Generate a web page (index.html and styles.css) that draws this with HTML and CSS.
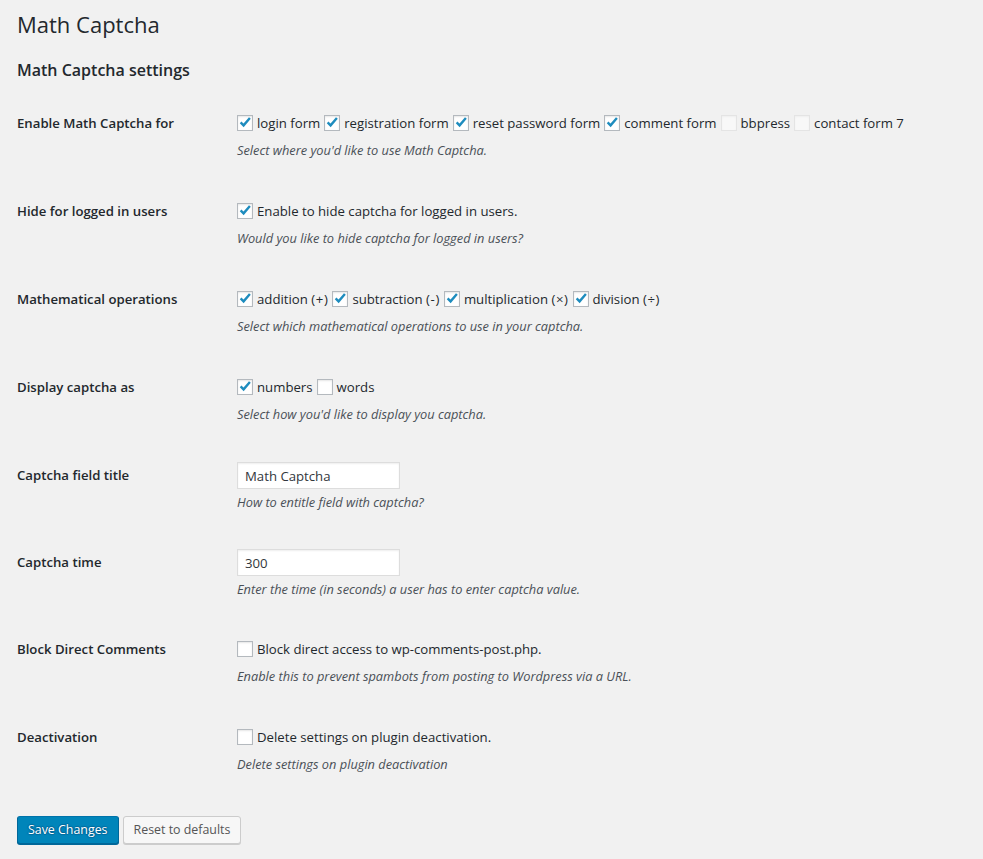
FILE: index.html
```html
<!DOCTYPE html>
<html lang="en">
<head>
<meta charset="utf-8">
<title>Math Captcha</title>
<link rel="stylesheet" href="styles.css">
</head>
<body>
<div class="wrap">
  <h1 class="page-title">Math Captcha</h1>
  <h2 class="section-title">Math Captcha settings</h2>

  <div class="form-table">
    <div class="row row-check">
      <div class="th">Enable Math Captcha for</div>
      <div class="td">
        <div class="line">
          <label class="opt"><span class="cb"><svg viewBox="0 0 16 16"><polyline points="3,7.8 6.4,11.3 13.6,2.8"/></svg></span>login form</label>
          <label class="opt"><span class="cb"><svg viewBox="0 0 16 16"><polyline points="3,7.8 6.4,11.3 13.6,2.8"/></svg></span>registration form</label>
          <label class="opt"><span class="cb"><svg viewBox="0 0 16 16"><polyline points="3,7.8 6.4,11.3 13.6,2.8"/></svg></span>reset password form</label>
          <label class="opt"><span class="cb"><svg viewBox="0 0 16 16"><polyline points="3,7.8 6.4,11.3 13.6,2.8"/></svg></span>comment form</label>
          <label class="opt"><span class="cb disabled"></span>bbpress</label>
          <label class="opt"><span class="cb disabled"></span>contact form 7</label>
        </div>
        <p class="description">Select where you'd like to use Math Captcha.</p>
      </div>
    </div>

    <div class="row row-check">
      <div class="th">Hide for logged in users</div>
      <div class="td">
        <div class="line">
          <label class="opt"><span class="cb"><svg viewBox="0 0 16 16"><polyline points="3,7.8 6.4,11.3 13.6,2.8"/></svg></span>Enable to hide captcha for logged in users.</label>
        </div>
        <p class="description">Would you like to hide captcha for logged in users?</p>
      </div>
    </div>

    <div class="row row-check">
      <div class="th">Mathematical operations</div>
      <div class="td">
        <div class="line">
          <label class="opt"><span class="cb"><svg viewBox="0 0 16 16"><polyline points="3,7.8 6.4,11.3 13.6,2.8"/></svg></span>addition <span class="sym">(+)</span></label>
          <label class="opt"><span class="cb"><svg viewBox="0 0 16 16"><polyline points="3,7.8 6.4,11.3 13.6,2.8"/></svg></span>subtraction <span class="sym">(-)</span></label>
          <label class="opt"><span class="cb"><svg viewBox="0 0 16 16"><polyline points="3,7.8 6.4,11.3 13.6,2.8"/></svg></span>multiplication <span class="sym">(&times;)</span></label>
          <label class="opt"><span class="cb"><svg viewBox="0 0 16 16"><polyline points="3,7.8 6.4,11.3 13.6,2.8"/></svg></span>division <span class="sym">(&divide;)</span></label>
        </div>
        <p class="description">Select which mathematical operations to use in your captcha.</p>
      </div>
    </div>

    <div class="row row-check">
      <div class="th">Display captcha as</div>
      <div class="td">
        <div class="line">
          <label class="opt"><span class="cb"><svg viewBox="0 0 16 16"><polyline points="3,7.8 6.4,11.3 13.6,2.8"/></svg></span>numbers</label>
          <label class="opt"><span class="cb"></span>words</label>
        </div>
        <p class="description">Select how you'd like to display you captcha.</p>
      </div>
    </div>

    <div class="row row-input">
      <div class="th">Captcha field title</div>
      <div class="td">
        <input class="text" type="text" value="Math Captcha">
        <p class="description">How to entitle field with captcha?</p>
      </div>
    </div>

    <div class="row row-input">
      <div class="th">Captcha time</div>
      <div class="td">
        <input class="text" type="text" value="300">
        <p class="description">Enter the time (in seconds) a user has to enter captcha value.</p>
      </div>
    </div>

    <div class="row row-check">
      <div class="th">Block Direct Comments</div>
      <div class="td">
        <div class="line">
          <label class="opt"><span class="cb"></span>Block direct access to wp-comments-post.php.</label>
        </div>
        <p class="description">Enable this to prevent spambots from posting to Wordpress via a URL.</p>
      </div>
    </div>

    <div class="row row-check">
      <div class="th">Deactivation</div>
      <div class="td">
        <div class="line">
          <label class="opt"><span class="cb"></span>Delete settings on plugin deactivation.</label>
        </div>
        <p class="description">Delete settings on plugin deactivation</p>
      </div>
    </div>
  </div>

  <div class="submit">
    <button class="btn btn-primary" type="button">Save Changes</button>
    <button class="btn btn-secondary" type="button">Reset to defaults</button>
  </div>
</div>
</body>
</html>
```

FILE: styles.css
```css
html, body {
  margin: 0;
  padding: 0;
  background: #f1f1f1;
}

body {
  font-family: "Open Sans", "Noto Sans", sans-serif;
  font-size: 13.2px;
  color: #23282d;
  height: 859px;
  overflow: hidden;
}

.wrap {
  padding: 0 0 0 17px;
}

.page-title {
  margin: 0;
  padding: 10px 0 0;
  font-size: 22px;
  font-weight: 400;
  line-height: 29px;
  color: #23282d;
}

.section-title {
  margin: 0;
  padding-top: 20px;
  font-size: 16px;
  font-weight: 600;
  line-height: 22px;
  color: #23282d;
}

.form-table {
  display: flex;
  flex-direction: column;
  padding-top: 33px;
}

.row {
  display: grid;
  grid-template-columns: 220px 1fr;
}

.row-check {
  padding-bottom: 43px;
}

.row-input {
  padding-bottom: 38px;
}

.row-check + .row-input {
  margin-top: -4px;
}

.row-input + .row-check {
  margin-top: 4px;
}

.th {
  font-weight: 600;
  font-size: 13.2px;
  line-height: 18px;
}

.row-input .th {
  padding-top: 4px;
}

.line {
  display: flex;
  align-items: center;
  gap: 4px;
  height: 18px;
  white-space: nowrap;
}

.opt {
  display: flex;
  align-items: center;
  height: 18px;
  line-height: 18px;
  white-space: pre;
}

.sym {
  letter-spacing: 0.6px;
  margin-left: 0;
}

.cb {
  display: flex;
  align-items: center;
  justify-content: center;
  width: 16px;
  height: 16px;
  box-sizing: border-box;
  border: 1px solid #b4b9be;
  background: #fff;
  box-shadow: inset 0 1px 2px rgba(0,0,0,0.1);
  margin: -1px 4px 0 0;
}

.cb svg {
  width: 15px;
  height: 15px;
  fill: none;
  stroke: #1e8cbe;
  stroke-width: 2.7;
  stroke-linecap: butt;
  stroke-linejoin: miter;
}

.cb.disabled {
  background: rgba(255,255,255,0.5);
  border-color: rgba(222,222,222,0.75);
  box-shadow: inset 0 1px 2px rgba(0,0,0,0.04);
}

.description {
  margin: 9px 0 0;
  font-size: 12.8px;
  line-height: 18px;
  font-style: italic;
  color: #4a5057;
}

.row-input .description {
  margin-top: 4px;
}

.text {
  display: block;
  box-sizing: border-box;
  width: 163px;
  height: 27px;
  margin: 0;
  padding: 3px 7px;
  border: 1px solid #ddd;
  box-shadow: inset 0 1px 2px rgba(0,0,0,0.07);
  background: #fff;
  font-family: "Open Sans", "Noto Sans", sans-serif;
  font-size: 13.2px;
  color: #32373c;
  outline: none;
}

.submit {
  display: flex;
  gap: 4px;
}

.btn {
  box-sizing: border-box;
  height: 28px;
  padding: 0 10px 1px;
  font-family: "Open Sans", "Noto Sans", sans-serif;
  font-size: 12.4px;
  line-height: 26px;
  border-radius: 3px;
  border-width: 1px;
  border-style: solid;
  cursor: pointer;
}

.btn-primary {
  background: #0085ba;
  border-color: #0073aa #006799 #006799;
  box-shadow: 0 1px 0 #006799;
  color: #fff;
  text-shadow: 0 -1px 1px #006799, 1px 0 1px #006799, 0 1px 1px #006799, -1px 0 1px #006799;
}

.btn-secondary {
  background: #f7f7f7;
  border-color: #ccc;
  box-shadow: 0 1px 0 #ccc;
  color: #555;
}
```
